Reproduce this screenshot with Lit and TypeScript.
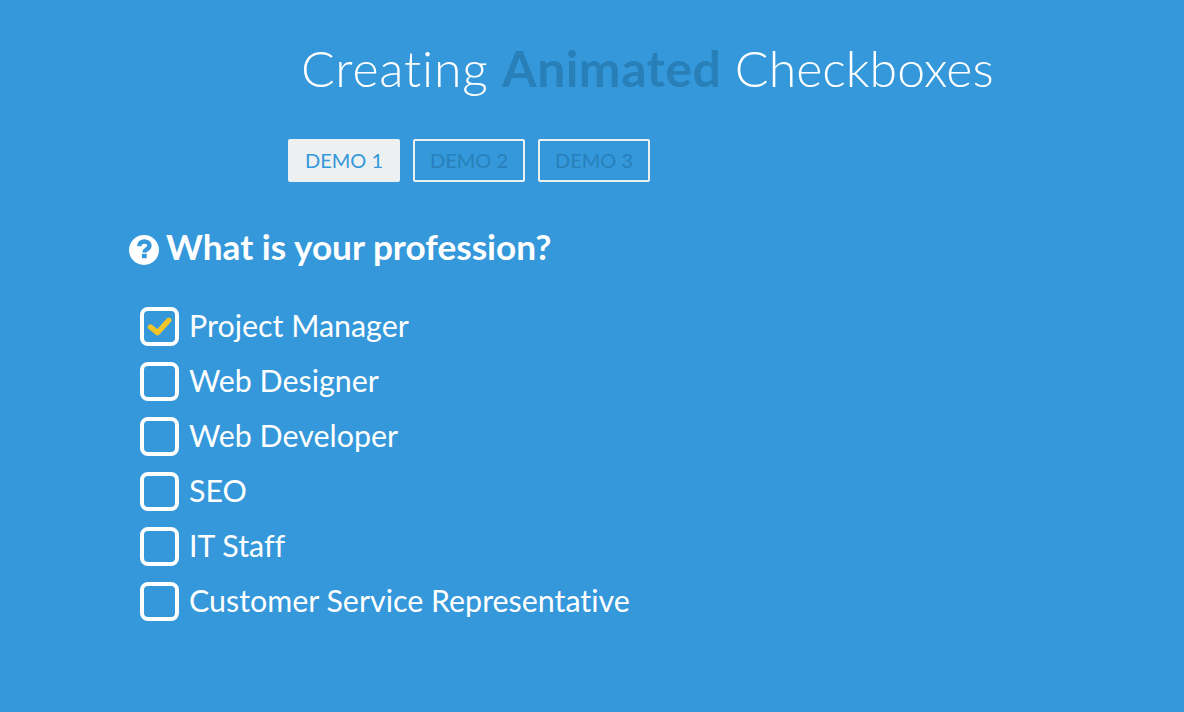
import { LitElement, css, html } from 'lit'
import { customElement } from 'lit/decorators.js'

const options = [
  { label: 'Project Manager', checked: true },
  { label: 'Web Designer', checked: false },
  { label: 'Web Developer', checked: false },
  { label: 'SEO', checked: false },
  { label: 'IT Staff', checked: false },
  { label: 'Customer Service Representative', checked: false },
]

@customElement('app-root')
export class AppRoot extends LitElement {
  render() {
    return html`
      <header class="title">
        <h1><span class="lead">Creating</span> <strong>Animated</strong> Checkboxes</h1>
      </header>
      <nav class="demos">
        <a class="demo active">DEMO 1</a>
        <a class="demo">DEMO 2</a>
        <a class="demo">DEMO 3</a>
      </nav>
      <section class="quiz">
        <h2>
          <svg class="help" viewBox="0 0 30 30" width="30" height="30">
            <circle cx="15" cy="15" r="15" fill="#fff"></circle>
            <path d="M10.300 11.200c0-3 2.100-4.700 5-4.700s5.100 1.600 5.100 4c0 2-1.200 3-2.600 3.900-1.300.8-2.200 1.300-2.200 3" fill="none" stroke="#3498db" stroke-width="4.400"></path>
            <rect x="12.900" y="18.800" width="4.800" height="4.400" fill="#3498db"></rect>
          </svg>
          What is your profession?
        </h2>
        <ul>
          ${options.map(
            (o) => html`
              <li>
                <span class="box">
                  ${o.checked
                    ? html`<svg viewBox="0 0 39 39" width="39" height="39">
                        <path d="M10.500 20l7 5.700 11.300-12.400" fill="none" stroke="#f1c42a" stroke-width="5.400" stroke-linecap="round" stroke-linejoin="round"></path>
                      </svg>`
                    : ''}
                </span>
                <span class="label">${o.label}</span>
              </li>
            `,
          )}
        </ul>
      </section>
    `
  }

  static styles = css`
    :host {
      display: block;
      box-sizing: border-box;
      height: 712px;
      overflow: hidden;
      background: #3498db;
      color: #fff;
      font-family: Lato, 'Open Sans', sans-serif;
      font-variant-ligatures: none;
    }
    .title {
      padding: 35px 0 0 301px;
    }
    h1 {
      margin: 0;
      font-size: 50px;
      line-height: 66px;
      font-weight: 300;
      white-space: nowrap;
    }
    h1 .lead {
      letter-spacing: 0.8px;
    }
    h1 strong {
      color: #2980b9;
      font-weight: 700;
      letter-spacing: 0.4px;
    }
    .demos {
      display: flex;
      gap: 13px;
      padding: 38px 0 0 288px;
    }
    .demo {
      box-sizing: border-box;
      width: 112px;
      height: 43px;
      padding-bottom: 2px;
      display: flex;
      align-items: center;
      justify-content: center;
      border: 2px solid #ecf0f1;
      border-radius: 2px;
      color: #2980b9;
      font-size: 20px;
    }
    .demo.active {
      background: #ecf0f1;
      color: #3498db;
    }
    .quiz {
      padding: 41px 0 0 129px;
    }
    h2 {
      display: flex;
      align-items: center;
      gap: 7px;
      margin: 0;
      font-size: 35.2px;
      line-height: 46px;
      font-weight: 700;
    }
    .help {
      flex: none;
      margin-top: 8px;
    }
    ul {
      list-style: none;
      margin: 0;
      padding: 38px 0 0 11px;
      display: flex;
      flex-direction: column;
      gap: 16px;
    }
    li {
      display: flex;
      align-items: center;
      gap: 10px;
      height: 39px;
      font-size: 30.4px;
      white-space: nowrap;
    }
    .label {
      margin-bottom: 4px;
    }
    .box {
      box-sizing: border-box;
      flex: none;
      position: relative;
      width: 39px;
      height: 39px;
      border: 4px solid #fff;
      border-radius: 8px;
    }
    .box svg {
      position: absolute;
      left: -4px;
      top: -4px;
    }
  `
}
